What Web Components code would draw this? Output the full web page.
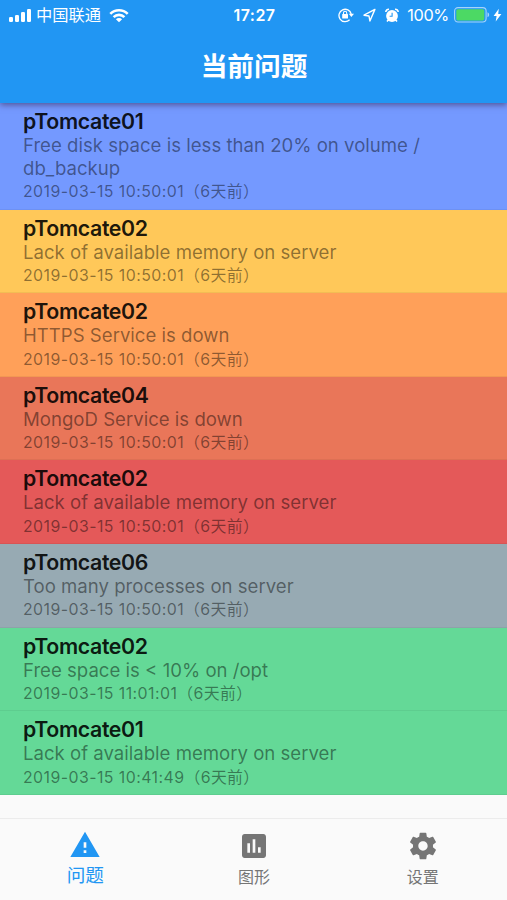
<!DOCTYPE html>
<html lang="zh-CN">
<head>
<meta charset="utf-8">
<title>当前问题</title>
<style>
html,body{margin:0;padding:0}
body{width:507px;height:900px;overflow:hidden;background:#fafafa;font-family:Inter,"Noto Sans CJK SC",sans-serif}
</style>
</head>
<body>
<problem-app></problem-app>
<script>
const define = (name, html) => customElements.define(name, class extends HTMLElement {
  constructor() {
    super();
    const t = document.createElement('template');
    t.innerHTML = html;
    this.attachShadow({mode: 'open'}).append(t.content.cloneNode(true));
  }
});

define('status-bar', `
<style>
:host{display:grid;grid-template-columns:1fr auto 1fr;align-items:center;height:30px;padding:0 5px 0 8px;box-sizing:border-box;color:#fff;font-size:16px;line-height:30px}
div{display:flex;align-items:center}
.carrier{margin:0 8px 0 4px;font-size:16.3px;height:30px}
.time{font-weight:600;font-size:16px;letter-spacing:.45px;margin-left:-1px}
.right{justify-content:flex-end}
.pct{margin:0 5px 0 8px;font-size:16.3px;letter-spacing:-.35px}
svg{display:block;flex:none}
</style>
<div>
<svg width="24" height="14" viewBox="0 0 24 14" fill="#fff"><rect x="1" y="9" width="4" height="5" rx="1.2"/><rect x="7" y="7" width="4" height="7" rx="1.2"/><rect x="13" y="4" width="4" height="10" rx="1.2"/><rect x="19" y="1" width="4" height="13" rx="1.2"/></svg>
<span class="carrier">中国联通</span>
<svg width="20" height="15" viewBox="0 0 20 15" fill="none" stroke="#fff" stroke-width="2.6"><path d="M1.3 5.8a12.3 12.3 0 0 1 17.4 0M4.6 9.1a7.6 7.6 0 0 1 10.800 0"/><path d="M6.9 11.2a4.4 4.4 0 0 1 6.2 0L10 14.3z" fill="#fff" stroke="none"/></svg>
</div>
<span class="time">17:27</span>
<div class="right">
<svg width="16" height="16" viewBox="0 0 16 16" fill="none" stroke="#fff" stroke-width="1.3"><path d="M11.6 12.8A6.2 6.2 0 1 1 13.2 7"/><path d="M10.8 6.8H16L13.4 10z" fill="#fff" stroke="none"/><rect x="4.2" y="7" width="5.8" height="4.4" rx=".5" fill="#fff" stroke="none"/><path d="M5.5 7.5V5.9a1.6 1.6 0 0 1 3.2 0v1.6" stroke-width="1.1"/></svg>
<svg style="margin-left:9px" width="13" height="14" viewBox="0 0 13 14" fill="none" stroke="#fff" stroke-width="1.4" stroke-linejoin="round"><path d="M11.9 1.4 1 7.2l5 .8.9 5z"/></svg>
<svg style="margin-left:9px" width="14" height="15" viewBox="0 0 14 15"><circle cx="7" cy="8" r="5.9" fill="#fff"/><path d="M.8 4A3 3 0 0 1 4 1.2M13.2 4A3 3 0 0 0 10 1.2M3.2 12 2 13.5M10.8 12l1.2 1.5" stroke="#fff" stroke-width="1.6" fill="none"/><path d="M7.1 4.7V8.3H4.6" stroke="#2196f3" stroke-width="1.1" fill="none"/></svg>
<span class="pct">100%</span>
<svg width="36" height="16" viewBox="0 0 36 16"><rect x=".6" y=".6" width="31.5" height="14.4" rx="3.4" fill="none" stroke="#a5d4fa" stroke-width="1.1"/><rect x="2.3" y="2.2" width="28" height="11.2" rx="1.6" fill="#4cd964"/><path d="M33.5 5.3c2.2 1 2.2 4 0 5z" fill="#a5d4fa"/></svg>
<svg style="margin-left:3px" width="9" height="14" viewBox="0 0 9 14"><path d="M5.8.8.6 8h3L2.7 13.4 8.4 6H5.2z" fill="#fff"/></svg>
</div>`);

define('app-bar', `
<style>
:host{display:block;height:103px;background:#2196f3;color:#fff;box-shadow:0 2px 6px rgba(60,40,80,.6);position:relative;z-index:1}
h1{margin:0;height:73px;line-height:72px;text-align:center;font-size:26.7px;font-weight:600;padding-left:1px}
</style>
<status-bar></status-bar>
<h1><slot></slot></h1>`);

define('problem-item', `
<style>
:host{display:flex;flex-direction:column;box-sizing:border-box;padding:6px 70px 0 23px;background:var(--tone);border-bottom:1px solid rgba(0,0,0,.05)}
.name{font-size:21.3px;line-height:25px;font-weight:600;letter-spacing:-.35px;color:rgba(0,0,0,.89)}
.text{font-size:18.6px;line-height:23px;letter-spacing:0;color:rgba(0,0,0,.45)}
.when{font-size:15.9px;line-height:23px;height:23px;padding-top:.4px;letter-spacing:.43px;color:rgba(0,0,0,.45);white-space:nowrap}
::slotted(.ago){letter-spacing:.35px}
</style>
<div class="name"><slot name="name"></slot></div>
<div class="text"><slot></slot></div>
<div class="when"><slot name="when"></slot><slot name="ago"></slot></div>`);

define('tab-item', `
<style>
:host{display:flex;flex:1;flex-direction:column;align-items:center;color:#757575;font-size:16px;line-height:24px;padding-top:10px;box-sizing:border-box}
:host([active]){color:#2196f3;font-size:18.6px;padding:9px 0 0 1px}
.icon{height:34px;display:flex;align-items:center}
span{height:24px;margin-top:2px}
:host([active]) span{margin-top:1px}
::slotted(svg){display:block;fill:currentColor}
</style>
<div class="icon"><slot name="icon"></slot></div><span><slot></slot></span>`);

define('tab-bar', `
<style>:host{display:flex;height:82px;box-sizing:border-box;border-top:1px solid #ececec;background:#fafafa}</style>
<slot></slot>`);

const rows = [
  ['#7499ff','pTomcate01','Free disk space is less than 20% on volume /<br>db_backup','2019-03-15 10:50:01'],
  ['#ffc859','pTomcate02','Lack of available memory on server','2019-03-15 10:50:01'],
  ['#ffa059','pTomcate02','HTTPS Service is down','2019-03-15 10:50:01'],
  ['#e97659','pTomcate04','MongoD Service is down','2019-03-15 10:50:01'],
  ['#e45959','pTomcate02','Lack of available memory on server','2019-03-15 10:50:01'],
  ['#97aab3','pTomcate06','Too many processes on server','2019-03-15 10:50:01'],
  ['#64d997','pTomcate02','Free space is &lt; 10% on /opt','2019-03-15 11:01:01'],
  ['#64d997','pTomcate01','Lack of available memory on server','2019-03-15 10:41:49']
];

define('problem-app', `
<style>
:host{display:flex;flex-direction:column;width:507px;height:900px}
main{flex:1;min-height:0}
problem-item{height:83.6px}
problem-item:first-child{height:106.7px}
</style>
<app-bar>当前问题</app-bar>
<main>${rows.map(([c,n,t,w]) => `<problem-item style="--tone:${c}"><span slot="name">${n}</span>${t}<span slot="when">${w}</span><span slot="ago" class="ago">（6天前）</span></problem-item>`).join('')}</main>
<tab-bar>
<tab-item active><svg slot="icon" width="32" height="32" viewBox="0 0 24 24"><path d="M1 21h22L12 2 1 21zm12-3h-2v-2h2v2zm0-4h-2v-4h2v4z"/></svg>问题</tab-item>
<tab-item><svg slot="icon" width="32" height="32" viewBox="0 0 24 24"><path d="M19 3H5c-1.100 0-2 .9-2 2v14c0 1.100.9 2 2 2h14c1.100 0 2-.9 2-2V5c0-1.100-.9-2-2-2zM9 17H7v-7h2v7zm4 0h-2V7h2v10zm4 0h-2v-4h2v4z"/></svg>图形</tab-item>
<tab-item><svg slot="icon" width="32" height="32" viewBox="0 0 24 24"><path d="M19.430 12.980c.04-.32.07-.64.07-.98s-.03-.66-.07-.98l2.110-1.650c.19-.15.24-.42.12-.64l-2-3.460c-.12-.22-.39-.3-.61-.22l-2.490 1c-.52-.4-1.080-.73-1.690-.98l-.38-2.650C14.460 2.180 14.250 2 14 2h-4c-.25 0-.46.18-.49.42l-.38 2.650c-.61.25-1.170.59-1.690.98l-2.490-1c-.23-.09-.49 0-.61.22l-2 3.460c-.13.22-.07.49.12.64l2.110 1.650c-.04.32-.07.65-.07.98s.03.66.07.98l-2.110 1.650c-.19.15-.24.42-.12.64l2 3.460c.12.22.39.3.61.22l2.490-1c.52.4 1.080.73 1.690.98l.38 2.650c.03.24.24.42.49.42h4c.25 0 .46-.18.49-.42l.38-2.650c.61-.25 1.170-.59 1.690-.98l2.490 1c.23.09.49 0 .61-.22l2-3.460c.12-.22.07-.49-.12-.64l-2.110-1.650zM12 15.500c-1.930 0-3.500-1.570-3.500-3.500s1.570-3.500 3.500-3.500 3.500 1.570 3.500 3.500-1.570 3.500-3.500 3.500z"/></svg>设置</tab-item>
</tab-bar>`);
</script>
</body>
</html>
